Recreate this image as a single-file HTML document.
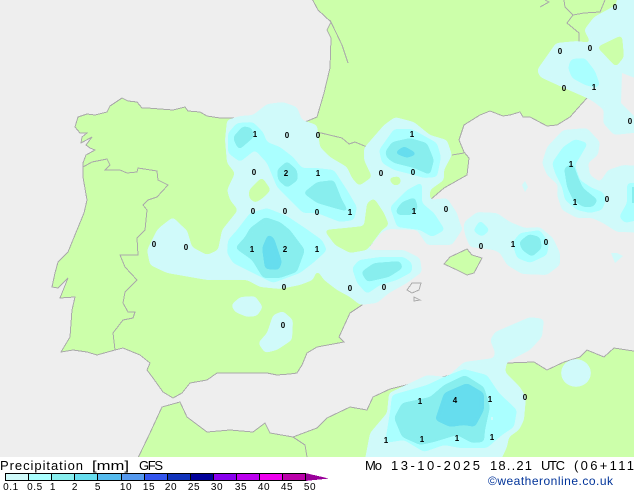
<!DOCTYPE html>
<html><head><meta charset="utf-8"><title>Precipitation GFS</title>
<style>
html,body{margin:0;padding:0;background:#fff;width:634px;height:490px;overflow:hidden}
svg{display:block}
.c1{fill:#D0FAFA}.c2{fill:#AAFFFF}.c3{fill:#88EEEE}.c4{fill:#66DDEE}
.l{fill:#CCFFAA}
.b{fill:none;stroke:#AAAAAA;stroke-width:1}
.v text{font:bold 8px "Liberation Sans",sans-serif;text-anchor:middle;fill:#000}
.t text{font:13px "Liberation Sans",sans-serif;fill:#000}
.k text{font:10px "Liberation Sans",sans-serif;text-anchor:middle;fill:#000;letter-spacing:.6px}
</style></head><body>
<svg xmlns="http://www.w3.org/2000/svg" width="634" height="490" viewBox="0 0 634 490">
<defs>
<clipPath id="m"><rect width="634" height="457"/></clipPath>
<filter id="s" filterUnits="userSpaceOnUse" x="-30" y="-30" width="700" height="520" color-interpolation-filters="sRGB">
<feGaussianBlur stdDeviation="2.2"/>
<feComponentTransfer><feFuncA type="linear" slope="24" intercept="-11.5"/></feComponentTransfer>
</filter>
</defs>
<rect width="634" height="490" fill="#fff"/>
<g clip-path="url(#m)">
<g shape-rendering="crispEdges">
<rect width="634" height="457" fill="#EEEEEE"/>
<!-- land -->
<polygon class="l" stroke="#AAAAAA" points="310,-5 640,-5 640,60 623,72 604,100 587,98 578,108 570,117 557,125 547,126 530,117 523,117 520,112 510,115 503,116 490,111 480,115 464,125 459,140 464,152 469,158 467,175 444,188 430,200 384,227 382,230 367,250 350,253 345,270 352,285 362,305 350,313 339,337 344,342 317,347 307,353 302,365 297,373 290,374 277,375 267,373 240,373 217,373 207,380 190,383 182,393 173,398 163,392 153,378 147,370 150,363 140,355 123,348 115,350 97,355 87,352 73,350 61,352 70,337 72,310 75,297 60,298 62,293 68,278 58,288 52,287 55,273 58,262 68,252 77,230 84,213 87,200 83,177 83,163 86,155 95,150 90,148 86,145 92,137 81,143 82,137 87,133 80,133 75,127 78,117 87,114 95,115 107,112 110,106 122,98 128,101 137,102 142,108 147,108 173,110 185,107 188,111 200,112 207,116 220,118 229,118 305,122 317,117 324,93 330,68 331,38 327,30 331,22 318,10"/>
<polygon class="l" stroke="#AAAAAA" points="137,460 150,433 162,407 180,402 187,417 207,432 230,430 253,432 265,423 270,433 293,437 317,428 327,418 350,407 367,410 373,397 390,389 430,379 447,376 507,363 534,362 547,370 564,362 580,357 587,350 604,357 614,348 640,352 640,460"/>
<polygon class="l" stroke="#AAAAAA" points="444,264 450,257 467,249 472,255 482,258 474,273 467,275 457,270"/>
<polygon fill="#EEEEEE" stroke="#AAAAAA" points="407,290 412,283 421,283 419,290 412,293"/>
<polygon fill="#EEEEEE" stroke="#AAAAAA" points="414,297 420,300 414,301"/>
<!-- borders -->
<polyline class="b" points="83,167 92,162 107,159 110,165 105,170 120,170 127,173 137,172 138,168 157,171 158,180 168,185 157,197 148,200 143,205 147,210 145,230 137,238 138,255 120,255 125,267 137,280 125,292 123,303 128,312 135,312 133,318 123,320 113,333 115,350"/>
<polyline class="b" points="317,132 342,138 349,144 355,142 367,147"/>
<polyline class="b" points="452,155 464,153"/>
<polyline class="b" points="564,0 565,7 573,15 567,23 579,33 579,42"/>
<polyline class="b" points="573,15 584,13 600,12 605,0"/>
<polyline class="b" points="540,7 549,2 545,0"/>
<polyline class="b" points="330,20 342,45 348,63"/>
<polyline class="b" points="293,437 305,445 307,457"/>
</g>
<!-- c1 -->
<g class="c1" filter="url(#s)">
<polygon points="227,120 240,116 253,115 267,104 283,102 297,107 302,120 317,125 320,147 330,157 347,167 352,178 359,186 372,177 364,160 364,148 384,125 395,117 414,122 430,135 447,140 452,155 444,170 444,180 430,190 430,200 447,198 457,213 462,230 452,245 427,245 417,230 389,229 382,232 367,250 404,250 420,258 422,272 407,283 389,293 377,303 360,305 350,297 337,290 324,280 317,270 313,280 300,285 280,289 260,287 247,280 207,280 167,273 150,265 147,250 157,230 160,227 173,217 183,227 187,230 192,247 207,255 218,250 222,230 238,210 230,200 227,190 235,173 227,163 225,140"/>
<polygon points="231,305 240,297 255,296 263,307 257,316 247,317 235,312"/>
<polygon points="273,315 283,311 293,320 292,340 277,350 265,353 258,343 267,333"/>
<polygon points="537,70 556,43 577,41 591,43 584,30 594,17 616,5 620,-20 660,-20 660,130 614,135 603,123 604,110 594,102 587,98 564,88 540,77"/>
<polygon points="542,163 547,147 563,130 587,128 600,142 598,155 588,163 590,175 600,182 608,170 623,165 660,167 660,233 617,232 603,223 592,218 577,218 562,210 557,195 558,185 547,175"/>
<polygon points="464,222 477,212 497,213 510,222 525,228 540,227 553,238 560,253 560,265 547,275 522,274 507,265 500,253 494,250 470,247 465,235"/>
<polygon points="362,475 370,433 387,413 389,393 427,375 447,377 464,362 494,358 495,352 490,340 495,332 530,317 544,319 542,337 530,350 507,362 505,372 520,387 526,397 524,420 519,430 509,437 507,447 494,475"/>
<ellipse cx="576" cy="373" rx="15" ry="14"/>
</g>
<polygon class="c1" points="522,185 525,181 528,187 525,192"/>
<polygon class="c1" points="611,253 617,253 623,256 615,263"/>
<g class="l" filter="url(#s)">
<polygon points="249,190 262,177 271,190 263,198 255,203 249,198"/>
<polygon points="374,198 367,203 364,226 345,228 324,230 335,245 350,253 367,250 382,230 389,225 384,213"/>
<polygon points="388,178 400,176 401,184 394,186"/>
<polygon points="597,47 622,35 624,57 616,67"/>
</g>
<polygon fill="#EEEEEE" points="622,73 640,80 640,122 621,103"/>
<!-- c2 -->
<g class="c2" filter="url(#s)">
<polygon points="228,133 237,123 253,122 263,132 267,142 280,147 293,157 302,168 317,168 334,170 347,190 357,207 354,220 340,222 317,213 303,213 297,207 277,187 267,163 255,150 240,162 228,153"/>
<polygon points="237,230 250,213 267,208 287,216 305,228 322,240 327,250 322,255 313,263 300,273 273,283 253,273 233,263 227,253 228,240"/>
<polygon points="379,150 394,129 412,129 437,143 441,157 437,177 424,178 414,175 394,170 382,163"/>
<polygon points="390,207 407,190 422,182 422,203 434,213 445,230 432,237 420,230 397,227"/>
<polygon points="352,268 359,260 380,257 404,257 412,263 412,272 397,280 380,285 367,294 357,283"/>
<polygon points="571,59 585,58 595,71 600,85 596,88 585,85 572,78 568,68"/>
<polygon points="552,163 563,147 575,139 588,143 580,157 575,165 580,180 592,188 603,192 606,200 602,210 590,213 577,210 565,200 562,187 555,173"/>
<polygon points="619,217 627,203 627,183 660,182 660,215 625,223"/>
<polygon points="512,243 520,233 540,230 549,243 547,255 530,263 517,258"/>
<polygon points="473,231 480,220 490,230 482,237"/>
<polygon points="385,443 390,412 392,395 427,385 444,377 464,369 487,375 499,393 517,410 514,427 502,435 487,448 460,448 444,445 424,452 404,440"/>
</g>
<!-- c3 -->
<g class="c3" filter="url(#s)">
<polygon points="233,137 243,126 252,128 254,137 239,150 235,143"/>
<polygon points="277,170 287,161 297,170 298,180 287,188 278,180"/>
<polygon points="303,193 317,182 334,180 342,200 349,212 334,208 317,203"/>
<polygon points="235,248 245,237 250,228 265,217 280,222 290,230 305,250 297,272 280,278 263,278 252,260"/>
<polygon points="385,152 392,142 410,138 427,143 434,160 430,175 414,168 394,163 387,158"/>
<polygon points="396,210 402,202 415,197 418,208 412,215 397,215"/>
<polygon points="361,272 374,263 400,261 403,268 389,277 367,282"/>
<polygon points="564,168 573,163 578,177 583,188 598,200 593,207 583,207 573,200 567,187"/>
<polygon points="519,242 529,234 540,237 542,248 532,257 522,250"/>
<polygon points="394,418 402,403 430,397 444,385 465,375 484,387 490,407 485,430 484,442 472,443 457,435 434,442 420,445 402,437"/>
</g>
<rect class="c3" x="632" y="187" width="2" height="16"/>
<!-- c4 -->
<g class="c4" filter="url(#s)">
<polygon points="262,248 268,234 274,238 282,262 279,270 265,269"/>
<polygon points="394,153 404,146 418,154 407,158"/>
<polygon points="435,420 444,393 467,383 484,393 484,410 475,427 464,425 450,427"/>
</g>
<rect class="c1" x="491" y="417" width="2" height="3"/>
</g>
<!-- values -->
<g class="v">
<text x="255" y="137">1</text><text x="287" y="138">0</text><text x="318" y="138">0</text>
<text x="254" y="175">0</text><text x="286" y="176">2</text><text x="318" y="176">1</text>
<text x="253" y="214">0</text><text x="285" y="214">0</text><text x="317" y="215">0</text><text x="350" y="215">1</text>
<text x="381" y="176">0</text><text x="413" y="175">0</text><text x="412" y="137">1</text><text x="414" y="214">1</text><text x="446" y="212">0</text>
<text x="560" y="54">0</text><text x="590" y="51">0</text><text x="615" y="10">0</text><text x="594" y="90">1</text><text x="564" y="91">0</text><text x="630" y="124">0</text>
<text x="571" y="167">1</text><text x="575" y="205">1</text><text x="607" y="202">0</text>
<text x="154" y="247">0</text><text x="186" y="250">0</text><text x="252" y="252">1</text><text x="285" y="252">2</text><text x="317" y="252">1</text>
<text x="284" y="290">0</text><text x="283" y="328">0</text>
<text x="350" y="291">0</text><text x="384" y="290">0</text>
<text x="481" y="249">0</text><text x="513" y="247">1</text><text x="546" y="245">0</text>
<text x="420" y="404">1</text><text x="455" y="403">4</text><text x="490" y="402">1</text><text x="525" y="400">0</text>
<text x="386" y="443">1</text><text x="422" y="442">1</text><text x="457" y="441">1</text><text x="492" y="440">1</text>
</g>
<!-- titles -->
<g class="t">
<text x="0" y="470" textLength="83" lengthAdjust="spacing">Precipitation</text>
<text x="92" y="470" textLength="37" lengthAdjust="spacingAndGlyphs">[mm]</text>
<text x="139" y="470" textLength="24" lengthAdjust="spacing">GFS</text>
<text x="365" y="470" textLength="17" lengthAdjust="spacing">Mo</text>
<text x="391" y="470" textLength="89" lengthAdjust="spacing">13-10-2025</text>
<text x="490" y="470" textLength="42" lengthAdjust="spacing">18..21</text>
<text x="541" y="470" textLength="24" lengthAdjust="spacing">UTC</text>
<text x="574" y="470" textLength="60" lengthAdjust="spacing">(06+111</text>
<text x="488" y="485" textLength="125" lengthAdjust="spacing" style="fill:#003399;font-size:12px">©weatheronline.co.uk</text>
</g>
<!-- legend -->
<g shape-rendering="crispEdges">
<rect x="5" y="473" width="23" height="8" fill="#D0FAFA"/>
<rect x="28" y="473" width="23" height="8" fill="#AAFFFF"/>
<rect x="51" y="473" width="23" height="8" fill="#88EEEE"/>
<rect x="74" y="473" width="23" height="8" fill="#66DDEE"/>
<rect x="97" y="473" width="24" height="8" fill="#55BBEE"/>
<rect x="121" y="473" width="23" height="8" fill="#5599EE"/>
<rect x="144" y="473" width="23" height="8" fill="#3355EE"/>
<rect x="167" y="473" width="23" height="8" fill="#1133BB"/>
<rect x="190" y="473" width="23" height="8" fill="#000099"/>
<rect x="213" y="473" width="23" height="8" fill="#8800EE"/>
<rect x="236" y="473" width="23" height="8" fill="#BB00EE"/>
<rect x="259" y="473" width="23" height="8" fill="#EE00EE"/>
<rect x="282" y="473" width="23" height="8" fill="#BB00AA"/>
<polygon points="305,473 329,478.5 305,481" fill="#990099"/>
<path d="M5 473.5H305M5 480.5H305M5.5 473V481M28.5 473V481M51.5 473V481M74.5 473V481M97.5 473V481M121.5 473V481M144.5 473V481M167.5 473V481M190.5 473V481M213.5 473V481M236.5 473V481M259.5 473V481M282.5 473V481M305.5 473V481" fill="none" stroke="#000" stroke-width="1"/>
</g>
<g class="k">
<text x="11" y="490">0.1</text><text x="35" y="490">0.5</text><text x="53" y="490">1</text><text x="75" y="490">2</text><text x="98" y="490">5</text>
<text x="126" y="490">10</text><text x="149" y="490">15</text><text x="171" y="490">20</text><text x="194" y="490">25</text><text x="217" y="490">30</text>
<text x="241" y="490">35</text><text x="264" y="490">40</text><text x="287" y="490">45</text><text x="310" y="490">50</text>
</g>
</svg>
</body></html>
